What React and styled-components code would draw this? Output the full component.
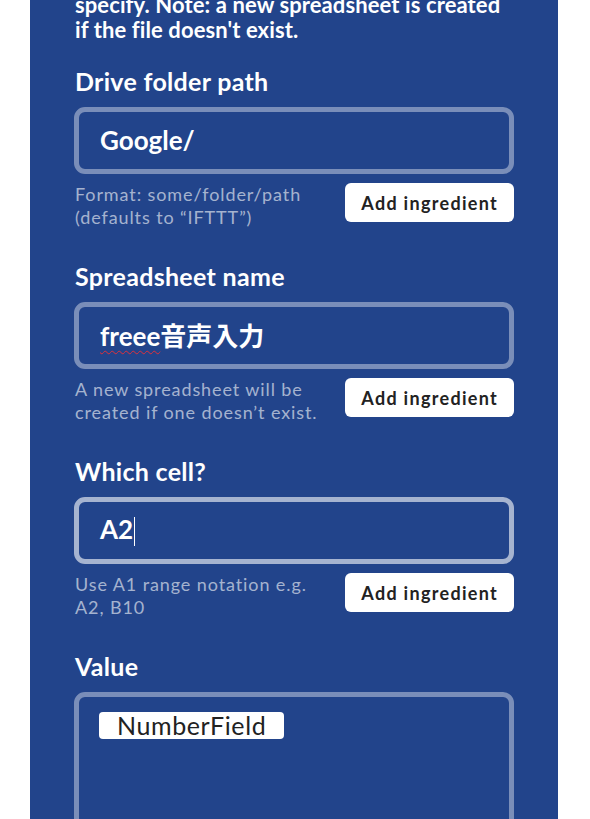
import React from 'react'
import styled, { createGlobalStyle } from 'styled-components'

const blue = '#22448b'
const faint = 'rgba(255, 255, 255, 0.4)'
const soft = 'rgba(255, 255, 255, 0.6)'

const GlobalStyle = createGlobalStyle`
  html, body {
    margin: 0;
    padding: 0;
    background: #fff;
    font-family: Lato, "Noto Sans CJK JP", sans-serif;
  }
`

const Panel = styled.div`
  margin-left: 30px;
  width: 528px;
  height: 819px;
  box-sizing: border-box;
  padding: 0 44px 0 45px;
  background: ${blue};
  overflow: hidden;
  color: #fff;
`

const Intro = styled.p`
  margin: -8px 0 0;
  font-size: 22px;
  line-height: 25px;
  font-weight: 700;
  letter-spacing: 0.1px;
  white-space: nowrap;
`

const Section = styled.div`
  display: flex;
  flex-direction: column;
  margin-top: ${p => p.top}px;
`

const Label = styled.div`
  font-size: 25px;
  line-height: 28px;
  font-weight: 700;
  letter-spacing: 0.3px;
  margin-bottom: 12px;
`

const Field = styled.div`
  display: flex;
  align-items: ${p => (p.tall ? 'flex-start' : 'center')};
  box-sizing: border-box;
  margin-left: -1px;
  height: ${p => (p.tall ? 160 : 67)}px;
  padding: ${p => (p.tall ? '15px 20px' : '0 21px 2px')};
  border: 5px solid ${p => (p.focused ? soft : faint)};
  border-radius: 11px;
  font-size: 26px;
  font-weight: 700;
`

const Typo = styled.span`
  text-decoration: underline wavy #e0303a;
  text-decoration-thickness: 1px;
  text-underline-offset: 4px;
`

const Caret = styled.span`
  display: inline-block;
  width: 1px;
  height: 29px;
  margin-left: 1px;
  background: #fff;
  vertical-align: middle;
`

const Footer = styled.div`
  display: flex;
  justify-content: space-between;
  align-items: flex-start;
  margin-top: 9px;
`

const Help = styled.div`
  width: 258px;
  font-size: 18px;
  line-height: 22.5px;
  letter-spacing: 0.9px;
  color: ${soft};
`

const AddButton = styled.button`
  flex: none;
  height: 39px;
  padding: 0 16px;
  border: 0;
  border-radius: 6px;
  background: #fff;
  color: #222;
  font-family: inherit;
  font-size: 18px;
  font-weight: 700;
  letter-spacing: 1.3px;
`

const Pill = styled.span`
  display: inline-block;
  height: 27px;
  line-height: 27px;
  padding: 0 18px;
  border-radius: 4px;
  background: #fff;
  color: #222;
  font-size: 25px;
  font-weight: 400;
  letter-spacing: 0.6px;
`

export default function App() {
  return (
    <>
      <GlobalStyle />
      <Panel>
        <Intro>
          specify. Note: a new spreadsheet is created
          <br />
          if the file doesn't exist.
        </Intro>

        <Section top={25}>
          <Label>Drive folder path</Label>
          <Field>Google/</Field>
          <Footer>
            <Help>
              Format: some/folder/path
              <br />
              (defaults to “IFTTT”)
            </Help>
            <AddButton>Add ingredient</AddButton>
          </Footer>
        </Section>

        <Section top={34}>
          <Label>Spreadsheet name</Label>
          <Field>
            <span>
              <Typo>freee</Typo>音声入力
            </span>
          </Field>
          <Footer>
            <Help>
              A new spreadsheet will be created if one doesn’t exist.
            </Help>
            <AddButton>Add ingredient</AddButton>
          </Footer>
        </Section>

        <Section top={34}>
          <Label>Which cell?</Label>
          <Field focused>
            <span>
              A2
              <Caret />
            </span>
          </Field>
          <Footer>
            <Help>Use A1 range notation e.g. A2, B10</Help>
            <AddButton>Add ingredient</AddButton>
          </Footer>
        </Section>

        <Section top={34}>
          <Label>Value</Label>
          <Field tall>
            <Pill>NumberField</Pill>
          </Field>
        </Section>
      </Panel>
    </>
  )
}
